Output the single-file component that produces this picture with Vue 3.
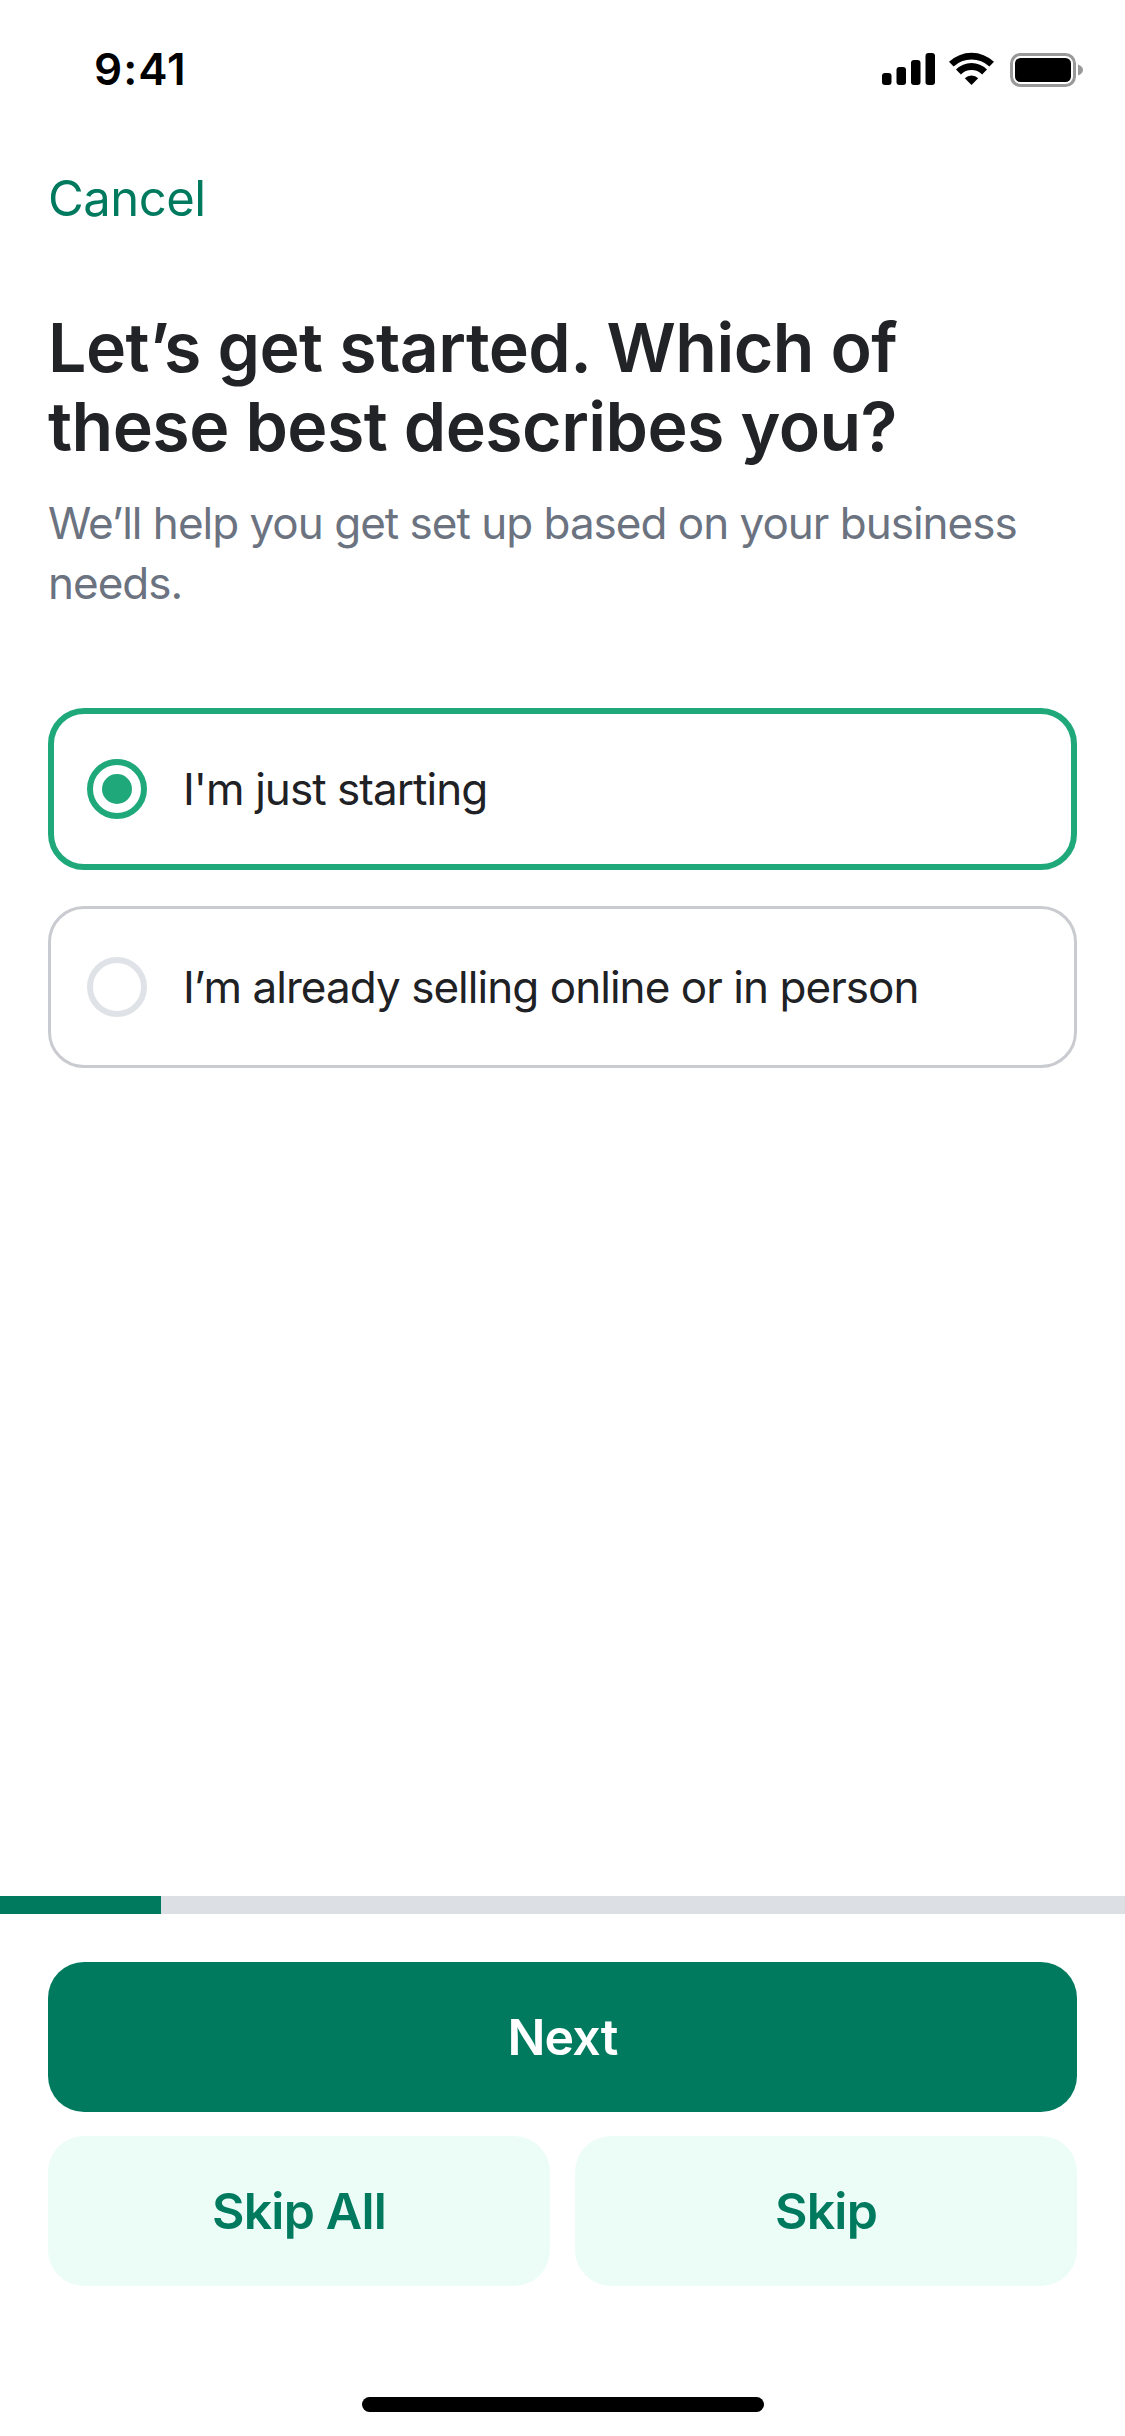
<script setup>
const options = [
  { label: "I'm just starting", selected: true },
  { label: "I’m already selling online or in person", selected: false }
]
</script>

<template>
  <div class="screen">
    <header class="status">
      <span class="time">9:41</span>
      <div class="indicators">
        <svg class="signal" width="53" height="32" viewBox="0 0 53 32" fill="#000">
          <rect x="0" y="20" width="9.5" height="12" rx="3" />
          <rect x="14.5" y="14" width="9.5" height="18" rx="3" />
          <rect x="29" y="7" width="9.5" height="25" rx="3" />
          <rect x="43.5" y="0" width="9.5" height="32" rx="3" />
        </svg>
        <svg class="wifi" width="45" height="33" viewBox="0 0 45 33" fill="#000">
          <path d="M0 9.7A33 33 0 0 1 45 9.7L40.4 14.6A26 26 0 0 0 4.6 14.6Z" />
          <path d="M7 17.4A22 22 0 0 1 38 17.4L33.1 22.4A15 15 0 0 0 11.9 22.4Z" />
          <path d="M15.8 26.3A9.5 9.5 0 0 1 29.2 26.3L22.5 33Z" />
        </svg>
        <svg class="battery" width="73" height="34" viewBox="0 0 73 34">
          <rect x="1.5" y="1.5" width="63" height="31" rx="9" fill="none" stroke="#999" stroke-width="3" />
          <rect x="5" y="5" width="56" height="24" rx="5.5" fill="#000" />
          <path d="M68 11.5C71 12.5 73 14.5 73 17S71 21.5 68 22.5Z" fill="#999" />
        </svg>
      </div>
    </header>

    <main class="content">
      <a class="cancel">Cancel</a>
      <h1 class="title">Let’s get started. Which of these best describes you?</h1>
      <p class="subtitle">We’ll help you get set up based on your business needs.</p>
      <div class="options">
        <div
          v-for="option in options"
          :key="option.label"
          class="option"
          :class="{ selected: option.selected }"
        >
          <span class="radio"><span v-if="option.selected" class="dot"></span></span>
          <span class="label">{{ option.label }}</span>
        </div>
      </div>
    </main>

    <footer class="footer">
      <div class="progress"><div class="progress-fill"></div></div>
      <div class="actions">
        <button class="btn primary">Next</button>
        <div class="secondary-row">
          <button class="btn secondary">Skip All</button>
          <button class="btn secondary">Skip</button>
        </div>
      </div>
      <div class="home"></div>
    </footer>
  </div>
</template>

<style>
html, body {
  margin: 0;
  background: #fff;
}
</style>

<style scoped>
.screen {
  width: 1125px;
  height: 2436px;
  display: flex;
  flex-direction: column;
  background: #fff;
  font-family: Inter, "Liberation Sans", sans-serif;
  overflow: hidden;
}
.status {
  height: 132px;
  box-sizing: border-box;
  padding: 46px 42px 0 94px;
  display: flex;
  justify-content: space-between;
  align-items: flex-start;
  flex: none;
}
.time {
  font-size: 44px;
  line-height: 46px;
  font-weight: 600;
  letter-spacing: 1px;
  color: #000;
}
.indicators {
  display: flex;
  align-items: flex-start;
  padding-top: 6px;
}
.signal { margin-top: 1px; }
.wifi { margin-left: 14px; }
.battery { margin-left: 16px; margin-top: 1px; }
.content {
  flex: 1;
  padding: 0 48px;
  display: flex;
  flex-direction: column;
  align-items: stretch;
}
.cancel {
  display: block;
  font-size: 49px;
  line-height: 60px;
  letter-spacing: -0.5px;
  color: #007a5e;
  margin-top: 37px;
}
.title {
  margin: 79px 0 0;
  max-width: 960px;
  font-size: 68px;
  line-height: 79px;
  font-weight: 600;
  color: #212326;
  letter-spacing: -0.55px;
}
.subtitle {
  margin: 27px 0 0;
  font-size: 44px;
  line-height: 60px;
  font-weight: 400;
  letter-spacing: -1px;
  color: #6b7280;
}
.options {
  margin-top: 95px;
  display: flex;
  flex-direction: column;
  gap: 36px;
}
.option {
  height: 162px;
  box-sizing: border-box;
  border: 3px solid #c9cbd0;
  border-radius: 36px;
  display: flex;
  align-items: center;
  padding-left: 36px;
  gap: 36px;
}
.option.selected {
  border: 6px solid #1fa97a;
  padding-left: 33px;
}
.radio {
  width: 60px;
  height: 60px;
  box-sizing: border-box;
  border: 6px solid #dfe2e7;
  border-radius: 50%;
  display: flex;
  align-items: center;
  justify-content: center;
  flex: none;
}
.selected .radio {
  border-color: #1fa97a;
}
.dot {
  width: 30px;
  height: 30px;
  border-radius: 50%;
  background: #1fa97a;
}
.label {
  font-size: 44px;
  line-height: 56px;
  letter-spacing: -0.95px;
  color: #202124;
}
.footer {
  flex: none;
}
.progress {
  height: 18px;
  background: #dcdfe4;
}
.progress-fill {
  width: 161px;
  height: 100%;
  background: #007a5e;
}
.actions {
  padding: 48px 48px 0;
  display: flex;
  flex-direction: column;
  gap: 24px;
}
.secondary-row {
  display: flex;
  gap: 25px;
}
.btn {
  height: 150px;
  border: none;
  border-radius: 36px;
  font-family: inherit;
  font-size: 50px;
  font-weight: 600;
  letter-spacing: -0.8px;
  padding: 0;
}
.primary {
  background: #007a5e;
  color: #fff;
}
.secondary {
  flex: 1;
  background: #ecfdf8;
  color: #007a5e;
}
.home {
  width: 402px;
  height: 15px;
  border-radius: 8px;
  background: #000;
  margin: 111px auto 24px;
}
</style>
